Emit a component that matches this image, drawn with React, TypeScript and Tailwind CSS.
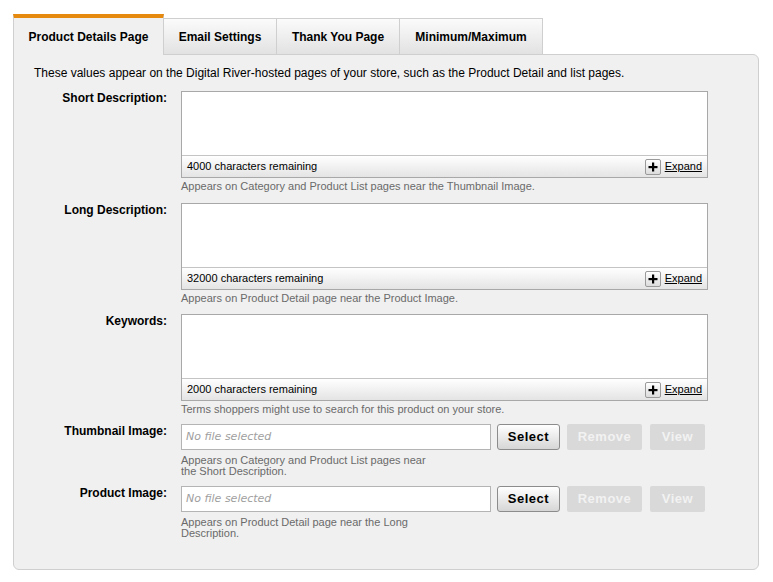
import React from "react";

const font = { fontFamily: '"Liberation Sans", Arial, sans-serif' };

function Area({ remaining, help }: { remaining: string; help: string }) {
  return (
    <div className="w-[527px]">
      <div className="border border-[#a8a8a8] bg-white">
        <div className="h-[63px] bg-white" />
        <div className="h-[22px] border-t border-[#c4c4c4] bg-gradient-to-b from-[#ffffff] to-[#e4e4e4] flex items-center justify-between pl-[5px] pr-[5px]">
          <span className="text-[11px] text-black">{remaining}</span>
          <span className="flex items-center gap-[4px]">
            <span className="w-[16px] h-[16px] border border-[#9a9a9a] rounded-[2px] bg-gradient-to-b from-white to-[#dcdcdc] flex items-center justify-center">
              <svg width="10" height="10" viewBox="0 0 10 10">
                <rect x="4" y="0.5" width="2.2" height="9" fill="#000" />
                <rect x="0.5" y="4" width="9" height="2.2" fill="#000" />
              </svg>
            </span>
            <span className="text-[11px] text-black underline">Expand</span>
          </span>
        </div>
      </div>
      <div className="text-[11px] text-[#6a6a6a] leading-[14px] mt-[1px]">{help}</div>
    </div>
  );
}

function FileRow({ help1, help2 }: { help1: string; help2: string }) {
  return (
    <div>
      <div className="flex items-center">
        <div className="w-[310px] h-[26px] border border-[#b4b4b4] bg-white flex items-center pl-[4px]">
          <span
            className="text-[11px] italic text-[#a0a0a0]"
            style={{ fontFamily: '"DejaVu Sans", Verdana, sans-serif' }}
          >
            No file selected
          </span>
        </div>
        <button className="ml-[6px] w-[63px] h-[26px] rounded-[3px] border border-[#8c8c8c] bg-gradient-to-b from-white to-[#d6d6d6] text-[13px] font-bold text-black tracking-[0.5px]">
          Select
        </button>
        <button className="ml-[7px] w-[75px] h-[26px] rounded-[2px] bg-[#d9d9d9] text-[13px] font-bold text-[#f2f2f2] tracking-[0.5px]">
          Remove
        </button>
        <button className="ml-[8px] w-[55px] h-[26px] rounded-[2px] bg-[#d9d9d9] text-[13px] font-bold text-[#f2f2f2] tracking-[0.5px]">
          View
        </button>
      </div>
      <div className="text-[11px] text-[#6a6a6a] leading-[10.5px] mt-[5px]">
        {help1}
        <br />
        {help2}
      </div>
    </div>
  );
}

function Label({ children }: { children: React.ReactNode }) {
  return (
    <div className="w-[153px] text-right text-[12px] font-bold text-black leading-[14px]">{children}</div>
  );
}

export default function App() {
  return (
    <div className="w-[773px] h-[582px] bg-white pt-[14px] pl-[13px]" style={font}>
      <div className="flex items-end">
        <div className="relative z-10 -mb-px w-[151px] h-[41px] border-t-[4px] border-[#e6890f] border-l border-l-[#cfcfcf] border-r border-r-[#cfcfcf] bg-[#f0f0f0] flex items-center justify-center">
          <span className="text-[12px] font-bold text-black">Product Details Page</span>
        </div>
        <div className="w-[113px] h-[36px] border-t border-r border-[#cfcfcf] bg-gradient-to-b from-[#fbfbfb] to-[#e2e2e2] flex items-center justify-center">
          <span className="text-[12px] font-bold text-black">Email Settings</span>
        </div>
        <div className="w-[123px] h-[36px] border-t border-r border-[#cfcfcf] bg-gradient-to-b from-[#fbfbfb] to-[#e2e2e2] flex items-center justify-center">
          <span className="text-[12px] font-bold text-black">Thank You Page</span>
        </div>
        <div className="w-[143px] h-[36px] border-t border-r border-[#cfcfcf] bg-gradient-to-b from-[#fbfbfb] to-[#e2e2e2] flex items-center justify-center">
          <span className="text-[12px] font-bold text-black">Minimum/Maximum</span>
        </div>
      </div>
      <div className="w-[746px] h-[516px] border border-[#cfcfcf] bg-[#f0f0f0] rounded-tr-[6px] rounded-b-[6px]">
        <div className="pt-[11px] pl-[20px] text-[12px] text-black leading-[14px]">
          These values appear on the Digital River-hosted pages of your store, such as the Product Detail and list pages.
        </div>
        <div className="mt-[11px] flex flex-col">
          <div className="flex gap-[14px]">
            <Label>Short Description:</Label>
            <Area remaining="4000 characters remaining" help="Appears on Category and Product List pages near the Thumbnail Image." />
          </div>
          <div className="flex gap-[14px] mt-[10px]">
            <Label>Long Description:</Label>
            <Area remaining="32000 characters remaining" help="Appears on Product Detail page near the Product Image." />
          </div>
          <div className="flex gap-[14px] mt-[9px]">
            <Label>Keywords:</Label>
            <Area remaining="2000 characters remaining" help="Terms shoppers might use to search for this product on your store." />
          </div>
          <div className="flex gap-[14px] mt-[8px]">
            <Label>Thumbnail Image:</Label>
            <FileRow help1="Appears on Category and Product List pages near" help2="the Short Description." />
          </div>
          <div className="flex gap-[14px] mt-[10px]">
            <Label>Product Image:</Label>
            <FileRow help1="Appears on Product Detail page near the Long" help2="Description." />
          </div>
        </div>
      </div>
    </div>
  );
}
